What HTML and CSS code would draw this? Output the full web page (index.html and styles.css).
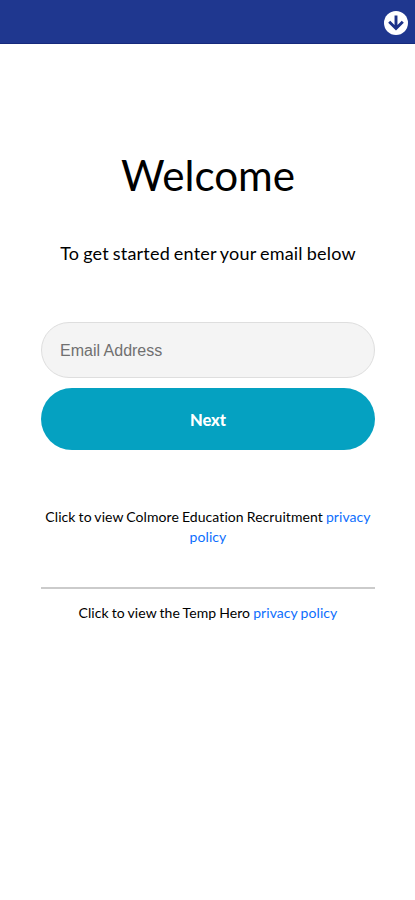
FILE: index.html
```html
<!DOCTYPE html>
<html lang="en">
<head>
<meta charset="utf-8">
<title>Welcome</title>
<link rel="stylesheet" href="styles.css">
</head>
<body>
<header class="bar">
<svg class="icon" viewBox="0 0 24 24" aria-hidden="true"><circle cx="12" cy="12" r="12" fill="#fff"/><path d="M12 4.5v13M5.2 10.7l6.8 6.8 6.8-6.8" fill="none" stroke="#1c3188" stroke-width="2.9"/></svg>
</header>
<main class="content">
<h1 class="title">Welcome</h1>
<p class="intro">To get started enter your email below</p>
<form class="form">
<input class="field" type="email" placeholder="Email Address" aria-label="Email Address">
<button class="next" type="button">Next</button>
</form>
<p class="policy">Click to view Colmore Education Recruitment <a href="#">privacy<br>policy</a></p>
<hr class="rule">
<p class="policy hero">Click to view the Temp Hero <a href="#">privacy policy</a></p>
</main>
</body>
</html>
```
FILE: styles.css
```css
* { box-sizing: border-box; }
body { margin: 0; background: #fff; color: #000; font-family: Lato, sans-serif; font-variant-ligatures: none; }
.bar { height: 44px; background: #1f378f; border-bottom: 1px solid #162a7c; display: flex; justify-content: flex-end; align-items: center; padding: 2px 7.5px 0 0; }
.icon { width: 24px; height: 24px; }
.content { padding: 105px 40px 0 41px; text-align: center; }
.title { margin: 0; font-size: 42.2px; line-height: 52px; font-weight: 400; }
.intro { margin: 40px 0 0; font-size: 18px; line-height: 24px; letter-spacing: 0.2px; word-spacing: -0.9px; white-space: nowrap; }
.form { margin-top: 57px; display: flex; flex-direction: column; gap: 10px; }
.field { height: 56px; border: 1px solid #dedede; border-radius: 28px; background: #f4f4f4; padding: 2px 18px 0; font: 16px "Liberation Sans", sans-serif; }
.field::placeholder { color: #707070; opacity: 1; }
.next { height: 62px; border: 0; border-radius: 31px; background: #05a1c1; color: #fff; font: 900 16.5px Lato, sans-serif; padding-top: 2px; }
.policy { margin: 57px 0 0; font-size: 14px; line-height: 20px; letter-spacing: 0.07px; word-spacing: -0.6px; white-space: nowrap; }
.policy a { color: #0d6efd; text-decoration: none; }
.rule { margin: 40px 0 0; border: 0; height: 2px; background: #cbcbcb; }
.hero { margin-top: 14px; }
```
